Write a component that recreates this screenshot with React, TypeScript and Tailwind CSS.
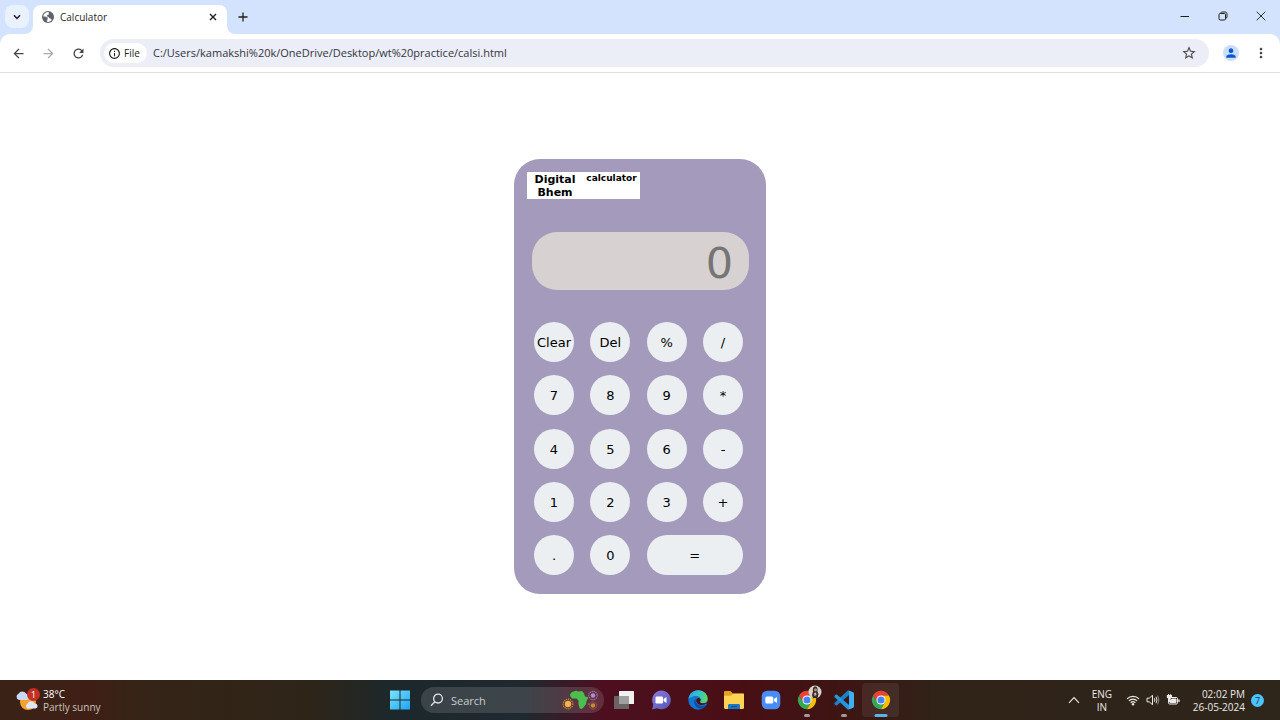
import { useState } from "react";
import type { ReactNode } from "react";
import {
  MdArrowBack,
  MdArrowForward,
  MdInfoOutline,
  MdMoreVert,
  MdPerson,
  MdRefresh,
  MdStarBorder,
} from "react-icons/md";

const uiFont = "font-['Open_Sans','Noto_Sans',sans-serif]";
const keyFont = "font-['DejaVu_Sans',sans-serif]";

const keys = [
  "Clear", "Del", "%", "/",
  "7", "8", "9", "*",
  "4", "5", "6", "-",
  "1", "2", "3", "+",
  ".", "0", "=",
];

function TabFlare({ flip }: { flip?: boolean }) {
  return (
    <svg viewBox="0 0 8 8" className={`size-2 self-end ${flip ? "-scale-x-100" : ""}`} fill="#fff">
      <path d="M8 0V8H0A8 8 0 0 0 8 0Z" />
    </svg>
  );
}

function TabStrip() {
  return (
    <div className="flex h-[34px] items-start bg-[#d3e3fd] pl-[5px] text-[#1f1f1f]">
      <button aria-label="Search tabs" className="-mr-1 mt-[5px] flex h-[23px] w-6 items-center justify-center rounded-lg bg-[#e9f1fe]">
        <svg viewBox="0 0 8 6" className="h-[6px] w-2" fill="none" stroke="currentColor" strokeWidth="1.5">
          <path d="M1 1.2 4 4.4 7 1.2" />
        </svg>
      </button>
      <TabFlare />
      <div className="mt-[5px] flex h-[29px] w-[194px] items-center rounded-t-lg bg-white pb-[5px] pl-2 pr-2">
        <svg viewBox="0 0 14 14" className="size-[14px]">
          <circle cx="7" cy="7" r="6" fill="#5f6368" />
          <path fill="#fff" d="M7.800 2.200 6.500 2.100C4.200 2.300 2.300 4.300 2.200 6.700L5 7.200C6.200 7.500 6.600 8.200 6.300 9.200L5.700 9.900 6 11.800 7.200 11.900C8.600 11.900 9.900 11.200 10.800 10.100L9.600 8.500 8.200 8.200 7.700 7 6.200 6.500 6 5.200 7.800 4.500Z" />
          <path fill="#5f6368" d="M2 6.200C3.800 6 6 6.400 7.200 7.600L6.600 10 5.400 11.900 3 10.500Z" opacity=".55" />
        </svg>
        <span className="ml-[5px] flex-1 text-[10px] leading-4">Calculator</span>
        <button aria-label="Close tab" className="flex size-3 items-center justify-center">
          <svg viewBox="0 0 8 8" className="size-2" stroke="currentColor" strokeWidth="1.4">
            <path d="M1 1 7 7M7 1 1 7" />
          </svg>
        </button>
      </div>
      <TabFlare flip />
      <button aria-label="New tab" className="mt-[9px] flex size-4 items-center justify-center">
        <svg viewBox="0 0 10 10" className="size-[10px]" stroke="currentColor" strokeWidth="1.3">
          <path d="M5 .5V9.5M.5 5H9.5" />
        </svg>
      </button>
      <div className="ml-auto flex h-8 items-center">
        <button aria-label="Minimize" className="flex h-8 w-[38px] items-center justify-center">
          <svg viewBox="0 0 10 10" className="size-[10px]" stroke="currentColor">
            <path d="M.5 5.5H9" />
          </svg>
        </button>
        <button aria-label="Restore" className="flex h-8 w-[38px] items-center justify-center">
          <svg viewBox="0 0 10 10" className="size-[10px]" fill="none" stroke="currentColor">
            <rect x="1" y="2.5" width="6.5" height="6.5" rx="1.2" />
            <path d="M2.7 2.3C2.8 1.3 3.4 1 4.2 1H7C8.3 1 9 1.7 9 3V5.8C9 6.7 8.6 7.3 7.7 7.4" />
          </svg>
        </button>
        <button aria-label="Close" className="flex h-8 w-[38px] items-center justify-center">
          <svg viewBox="0 0 10 10" className="size-[10px]" stroke="currentColor" strokeWidth=".9">
            <path d="M.7.7 9.3 9.3M9.3.7.7 9.3" />
          </svg>
        </button>
      </div>
    </div>
  );
}

function Toolbar() {
  return (
    <div className="bg-[#d3e3fd]">
      <div className="flex h-[39px] items-center rounded-t-[10px] border-b border-[#e0e0e0] bg-white px-[11px] text-[#474747]">
        <button aria-label="Back" className="w-[15px]"><MdArrowBack className="size-[15px]" /></button>
        <button aria-label="Forward" className="ml-[15px] w-[15px] text-[#a9a9a9]"><MdArrowForward className="size-[15px]" /></button>
        <button aria-label="Reload" className="ml-[15px] w-[15px]"><MdRefresh className="size-[15px]" /></button>
        <div className="ml-[14px] flex h-7 flex-1 items-center rounded-full bg-[#ebedf7] pl-1 pr-3">
          <button className="flex h-5 w-[43px] items-center gap-[3px] rounded-full bg-white pl-1 text-[10px] leading-4 text-[#1f1f1f]">
            <MdInfoOutline className="size-[13px]" />
            File
          </button>
          <input
            aria-label="Address"
            className="ml-[6px] h-5 min-w-0 flex-1 bg-transparent text-[11px] leading-5 text-[#33363b] outline-none"
            defaultValue="C:/Users/kamakshi%20k/OneDrive/Desktop/wt%20practice/calsi.html"
          />
          <button aria-label="Bookmark this page"><MdStarBorder className="size-4" /></button>
        </div>
        <button aria-label="Profile" className="ml-[14px] flex size-4 items-center justify-center rounded-full bg-[#cbdefc] text-[#0b57d0]">
          <MdPerson className="size-[14px]" />
        </button>
        <button aria-label="Menu" className="ml-[14px] w-4"><MdMoreVert className="size-4" /></button>
      </div>
    </div>
  );
}

function Calculator() {
  const [value, setValue] = useState("");
  const press = (key: string) => {
    if (key === "Clear") setValue("");
    else if (key === "Del") setValue(value.slice(0, -1));
    else if (key !== "=") setValue(value + key);
  };
  return (
    <section className={`w-[252px] rounded-[26px] bg-[#a49abb] pb-[19px] pt-[13px] text-black ${keyFont}`}>
      <div className="ml-[13px] flex h-[27px] w-[113px] items-start bg-white font-bold">
        <h1 className="w-14 pt-px text-center text-[11px] leading-[13px]">Digital Bhem</h1>
        <h2 className="flex-1 text-center text-[9px] leading-3">calculator</h2>
      </div>
      <input
        aria-label="Result"
        placeholder="0"
        readOnly
        value={value}
        className="ml-[18px] mt-[33px] block h-[58px] w-[217px] rounded-[25px] bg-[#d7d1d1] pr-4 pt-1 text-right text-[43px] outline-none placeholder:text-[#757575]"
      />
      <div className="ml-5 mt-8 grid h-[253px] w-[209px] grid-cols-[repeat(4,40px)] content-between justify-between">
        {keys.map((key) => (
          <button
            key={key}
            onClick={() => press(key)}
            className={`flex h-10 items-center justify-center rounded-full bg-[#ebeff2] pt-[2px] text-[13px] leading-4 ${key === "=" ? "col-span-2" : ""}`}
          >
            {key}
          </button>
        ))}
      </div>
    </section>
  );
}

function ChromeIcon() {
  return (
    <svg viewBox="0 0 48 48" className="size-5">
      <path fill="#ea4335" d="M24 2C15.900 2 8.800 6.400 5 13L14.500 29.500 24 13H43C39.200 6.400 32.100 2 24 2Z" />
      <path fill="#34a853" d="M5 13A22 22 0 0 0 24 46L33.500 29.500H14.500Z" />
      <path fill="#fbbc04" d="M43 13H24L33.500 29.500 24 46A22 22 0 0 0 43 13Z" />
      <circle cx="24" cy="24" r="11" fill="#fff" />
      <circle cx="24" cy="24" r="8.600" fill="#4285f4" />
    </svg>
  );
}

function AppButton({ label, state, children }: { label: string; state?: "open" | "active"; children: ReactNode }) {
  return (
    <button
      aria-label={label}
      className={`relative flex h-[34px] flex-1 items-center justify-center rounded ${state === "active" ? "bg-white/7" : ""}`}
    >
      {children}
      {state && (
        <span
          className={`absolute bottom-0 left-1/2 h-[3px] -translate-x-1/2 rounded-full ${state === "active" ? "w-[13px] bg-[#58b6e6]" : "w-[6px] bg-[#a59a98]"}`}
        />
      )}
    </button>
  );
}

function Taskbar() {
  return (
    <footer className="grid h-10 grid-cols-[1fr_auto_1fr] bg-[linear-gradient(90deg,#3a2217_0%,#3f1f15_7%,#352417_11%,#2e2518_24%,#1c282c_31%,#20292f_41%,#4d0f20_47%,#490f15_57%,#3d1513_66%,#302318_73%,#2e251b_100%)] text-white">
      <div className="flex items-center gap-[3px] pl-4">
        <svg viewBox="0 0 24 24" className="size-6">
          <circle cx="12" cy="14" r="8" fill="#f7a12c" />
          <path fill="#c8d8f5" d="M3 12A3.300 3.300 0 0 1 2.500 5.800 4.500 4.500 0 0 1 10.500 6 3 3 0 0 1 10 12Z" />
          <path fill="#dce6fb" d="M11.500 20.500A2.600 2.600 0 0 1 11.500 15.700 3.800 3.800 0 0 1 18.500 15.600 2.500 2.500 0 0 1 19.500 20.500Z" />
          <circle cx="17.500" cy="6.500" r="6.500" fill="#c32f22" />
          <text x="17.500" y="10" fill="#fff" fontSize="9.500" textAnchor="middle">1</text>
        </svg>
        <div className="pt-px text-[10px] leading-[13px]">
          <div>38°C</div>
          <div className="text-[#c9c3bd]">Partly sunny</div>
        </div>
      </div>

      <div className="flex items-center">
        <button aria-label="Start" className="flex h-9 w-[37px] items-center justify-center">
          <svg viewBox="0 0 20 20" className="size-5">
            <defs>
              <linearGradient id="win" x1="0" y1="0" x2="1" y2="1">
                <stop offset="0" stopColor="#7be4fb" />
                <stop offset="1" stopColor="#1ea4f2" />
              </linearGradient>
            </defs>
            <path fill="url(#win)" d="M0 .5H9.500V9.500H0ZM10.500.5H20V9.500H10.500ZM0 10.500H9.500V19.500H0ZM10.500 10.500H20V19.500H10.500Z" />
          </svg>
        </button>
        <label className="ml-[3px] flex h-[26px] w-[183px] items-center rounded-full bg-white/13 pl-[9px] pr-[5px]">
          <svg viewBox="0 0 14 14" className="size-[14px]" fill="none" stroke="#e4e6e8" strokeWidth="1.300">
            <circle cx="8" cy="5.600" r="4.400" />
            <path d="M4.900 8.800 1 12.800" />
          </svg>
          <input
            aria-label="Search"
            placeholder="Search"
            className="ml-[7px] min-w-0 flex-1 bg-transparent pt-px text-[11px] leading-4 outline-none placeholder:text-[#c9cbce]"
          />
          <svg viewBox="0 0 38 22" className="h-[22px] w-[38px]">
            <circle cx="7" cy="15" r="4.800" fill="none" stroke="#ef9a2d" strokeWidth="1.200" strokeDasharray="1 1" />
            <circle cx="7" cy="15" r="3.200" fill="#f7b04a" />
            <path fill="#4cc04f" d="M9 5.500 11 3 15 1.800 17.500 2.500 21 2 23 4.500 24 7.500 27.500 8.500 25.500 12 25 15 22.500 18.500 20.500 20 18.800 19.500 17.500 15.500 17.500 11.500 15.500 9.500 11 9.500 9.500 7.500Z" />
            <circle cx="32" cy="6.500" r="4.200" fill="none" stroke="#b285cf" strokeWidth="1.200" strokeDasharray="1 1" />
            <circle cx="32" cy="6.500" r="2.200" fill="#b78ad2" />
            <circle cx="32" cy="16.500" r="3.600" fill="none" stroke="#b57a3a" strokeWidth="1" strokeDasharray="1 1" />
            <circle cx="32" cy="16.500" r="2.200" fill="#c98a3b" />
            <circle cx="27.500" cy="15" r=".8" fill="#57a843" />
          </svg>
        </label>
        <nav className="ml-[2px] flex w-[293px]">
          <AppButton label="Task view">
            <svg viewBox="0 0 20 18" className="h-[18px] w-5">
              <rect x="5" width="15" height="13" rx=".5" fill="#f1f0f0" />
              <rect y="5" width="15" height="13" rx=".5" fill="#6b6465" />
              <path fill="#a29fa0" d="M5 5H15V13H5Z" />
            </svg>
          </AppButton>
          <AppButton label="Chat">
            <svg viewBox="0 0 20 20" className="size-5">
              <defs>
                <linearGradient id="chat" x1="0" y1="0" x2="1" y2="1">
                  <stop offset="0" stopColor="#8e7ad8" />
                  <stop offset="1" stopColor="#5057b8" />
                </linearGradient>
              </defs>
              <path fill="url(#chat)" d="M10.500.5A9.400 9.400 0 1 1 6 18.200L1.200 19.500 2.300 14.500A9.400 9.400 0 0 1 10.500.5Z" />
              <rect x="4.500" y="6.500" width="7.500" height="7" rx="1.300" fill="#fff" />
              <path fill="#fff" d="M12.500 9 15.500 7V13L12.500 11Z" />
            </svg>
          </AppButton>
          <AppButton label="Microsoft Edge">
            <svg viewBox="0 0 20 20" className="size-5">
              <defs>
                <linearGradient id="edge" x1="0" y1=".3" x2="1" y2=".5">
                  <stop offset="0" stopColor="#2aa7e4" />
                  <stop offset=".55" stopColor="#35c5c8" />
                  <stop offset="1" stopColor="#62d65c" />
                </linearGradient>
              </defs>
              <circle cx="10" cy="10" r="9.700" fill="#1376cf" />
              <path fill="url(#edge)" d="M.4 9.500C.8 4 5 .3 10.200.3 15.800.3 19.700 4.200 19.700 8.600 19.700 11.500 17.600 13.300 15 13.300 12.900 13.300 11.900 12.600 11.900 12 11.900 11.500 12.700 11 12.700 9.700 12.700 7.800 10.900 6.100 8.200 6.100 4.500 6.100 1 8 .4 9.500Z" />
              <path fill="#0c4f9f" d="M7.500 8.500C5.800 10.300 5.700 13.600 7.500 16 9.500 18.500 12.500 19 15 18.300 16.800 17.300 18 16 18.600 14.800 16.500 16.200 12 16.400 9.500 14.200 7.700 12.600 7.100 10.500 7.500 8.500Z" />
              <path fill="#4a1013" d="M8.300 9.800C8 12 9.600 14.700 13 14.900 15.600 15 17.600 14.200 19.500 13.300L20 11.500C18.400 13.100 16.800 13.500 15 13.300 12.900 13.300 11.900 12.600 11.900 12 11.900 11.500 12.700 11 12.700 9.700 12.600 8.500 11.400 7.800 10.300 7.900 9.200 8 8.500 8.800 8.300 9.800Z" />
            </svg>
          </AppButton>
          <AppButton label="File Explorer">
            <svg viewBox="0 0 20 18" className="h-[18px] w-5">
              <path fill="#e3a321" d="M0 1.200C0 .5.500 0 1.200 0H6.500L8.500 2.200H19C19.600 2.200 20 2.600 20 3.200V8H0Z" />
              <path fill="#fcd354" d="M0 4.800H6.800L8.800 3H20V16.500C20 17.300 19.500 18 18.500 18H1.500C.5 18 0 17.300 0 16.500Z" />
              <path fill="#1c78c4" d="M4 18V14.500C4 13.500 4.700 13 5.500 13H14.500C15.300 13 16 13.500 16 14.500V18Z" />
              <rect x="7" y="15.200" width="6" height="1" fill="#124d85" />
            </svg>
          </AppButton>
          <AppButton label="Zoom">
            <svg viewBox="0 0 20 20" className="size-5">
              <rect x=".7" y=".7" width="18.600" height="18.600" rx="5.500" fill="#4a8cf5" />
              <rect x="4.300" y="6.500" width="8" height="7" rx="1.600" fill="#fff" />
              <path fill="#fff" d="M13 9 16 7V13L13 11Z" />
            </svg>
          </AppButton>
          <AppButton label="Google Chrome, profile" state="open">
            <ChromeIcon />
            <svg viewBox="0 0 14 14" className="absolute right-[4px] top-[2px] size-[14px]">
              <circle cx="7" cy="7" r="6.500" fill="#d6d3d1" />
              <path fill="#3b2b2a" d="M6.800 1.500C9.500 1.300 10 4 9.400 6.500L10.500 9 9.500 13 5 13.200 4 10 5 6.500C4.500 4 5 1.700 6.800 1.500Z" />
              <circle cx="7.500" cy="4.700" r="1.500" fill="#b98e76" />
              <path fill="#d7b49c" d="M6 8 8 7.500 8.500 10 6.500 11Z" />
            </svg>
          </AppButton>
          <AppButton label="Visual Studio Code" state="open">
            <svg viewBox="0 0 100 100" className="size-5">
              <path fill="#1b80c4" d="M70 1 97 13V28L74 26 14 78 9 77 2 70V65Z" />
              <path fill="#2496dd" d="M70 99 97 87V72L74 74 14 22 9 23 2 30V35Z" />
              <path fill="#3eb0f2" d="M70 99C74 98 75 96 75 93V7C75 4 74 2 70 1L97 13C99 14 100 16 100 18V82C100 84 99 86 97 87Z" />
            </svg>
          </AppButton>
          <AppButton label="Google Chrome" state="active">
            <ChromeIcon />
          </AppButton>
        </nav>
      </div>

      <div className="flex items-center justify-end pr-4 text-[10px] leading-[13px] text-[#eceae8]">
        <button aria-label="Show hidden icons" className="flex w-3 justify-center">
          <svg viewBox="0 0 12 8" className="h-2 w-3" fill="none" stroke="currentColor" strokeWidth="1.100">
            <path d="M1 6.800 6 1.500 11 6.800" />
          </svg>
        </button>
        <div className="ml-[10px] w-6 pt-px text-center">
          <div>ENG</div>
          <div>IN</div>
        </div>
        <svg viewBox="0 0 14 12" className="ml-3 h-3 w-[14px]" fill="none" stroke="currentColor" strokeWidth="1.200">
          <path d="M1 4.800A8.500 8.500 0 0 1 13 4.800M2.900 6.800A5.800 5.800 0 0 1 11.100 6.800M4.700 8.700A3.300 3.300 0 0 1 9.300 8.700" />
          <circle cx="7" cy="10.300" r="1.200" fill="currentColor" stroke="none" />
        </svg>
        <svg viewBox="0 0 14 12" className="ml-[6px] h-3 w-[14px]" fill="none" stroke="currentColor">
          <path d="M1 4.200H3.200L6.500 1.300V10.700L3.200 7.800H1Z" />
          <path d="M8.300 4.200Q9.500 6 8.300 7.800M10 2.800Q12 6 10 9.200" />
          <path d="M11.600 1.500Q14.300 6 11.600 10.500" opacity=".5" />
        </svg>
        <svg viewBox="0 0 14 12" className="ml-[6px] h-3 w-[14px]" fill="none" stroke="currentColor">
          <rect x="2.500" y="3.500" width="9" height="6.500" rx="1.200" />
          <path fill="currentColor" d="M6 5H10V8.500H4V7Z" />
          <path d="M13 5.500V8" strokeWidth="1.400" />
          <path fill="currentColor" stroke="none" d="M.8 1H2V0H3V1H4.200V0H5V1H6V3.500L4.500 5V8H2.500V5L.8 3.500Z" />
        </svg>
        <time className="ml-[13px] pt-px text-right" dateTime="2024-05-26T14:02">
          <span className="block">02:02 PM</span>
          <span className="block">26-05-2024</span>
        </time>
        <span className="ml-[6px] flex size-[13px] items-center justify-center rounded-full bg-[#4cc2ff] text-[9px] text-[#123247]">7</span>
      </div>
    </footer>
  );
}

export default function App() {
  return (
    <div className={`flex min-h-screen flex-col bg-white ${uiFont}`}>
      <header>
        <TabStrip />
        <Toolbar />
      </header>
      <main className="flex flex-1 items-center justify-center">
        <Calculator />
      </main>
      <Taskbar />
    </div>
  );
}
